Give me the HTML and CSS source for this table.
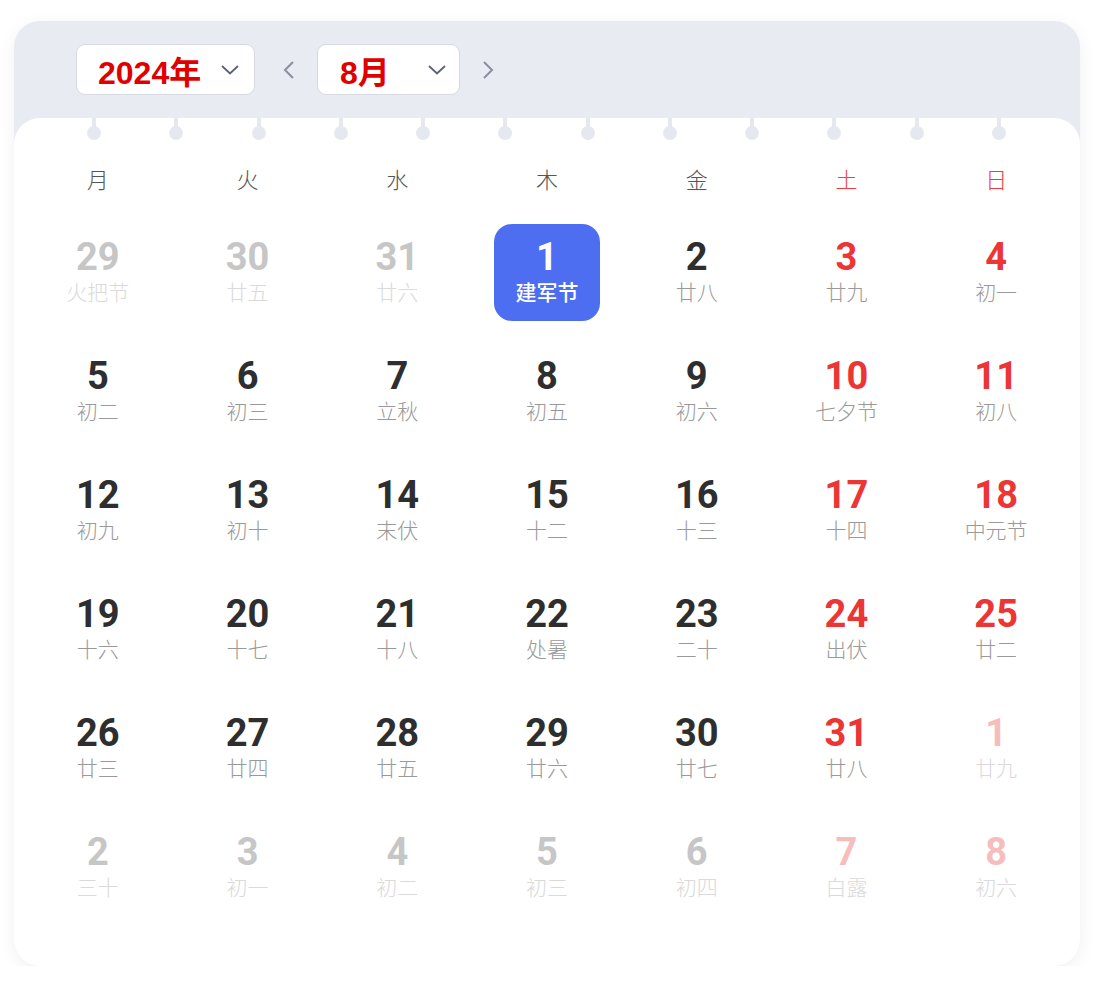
FILE: index.html
```html
<!DOCTYPE html>
<html>
<head>
    <title>万年历</title>
    <meta charset="utf-8">
    <link rel="stylesheet" href="styles.css">
</head>
<body>
    <div class="calendar">
        <div class="toolbar">
            <div class="picker picker-year">
                <span>2024年</span>
                <svg class="chevron" width="18" height="10" viewBox="0 0 18 10"><polyline points="1,1 9,8.5 17,1" fill="none" stroke="#5b6275" stroke-width="1.8"/></svg>
            </div>
            <svg class="arrow arrow-prev" width="12" height="20" viewBox="0 0 12 20"><polyline points="10,2 2,10 10,18" fill="none" stroke="#8a909e" stroke-width="2"/></svg>
            <div class="picker picker-month">
                <span>8月</span>
                <svg class="chevron" width="18" height="10" viewBox="0 0 18 10"><polyline points="1,1 9,8.5 17,1" fill="none" stroke="#5b6275" stroke-width="1.8"/></svg>
            </div>
            <svg class="arrow arrow-next" width="12" height="20" viewBox="0 0 12 20"><polyline points="2,2 10,10 2,18" fill="none" stroke="#8a909e" stroke-width="2"/></svg>
        </div>

        <div class="sheet">
            <div class="rings">
                <i></i><i></i><i></i><i></i><i></i><i></i>
                <i></i><i></i><i></i><i></i><i></i><i></i>
            </div>

            <div class="weekdays">
                <div>月</div>
                <div>火</div>
                <div>水</div>
                <div>木</div>
                <div>金</div>
                <div class="weekend">土</div>
                <div class="weekend">日</div>
            </div>

            <div class="days">
                <div class="day other"><b>29</b><span>火把节</span></div>
                <div class="day other"><b>30</b><span>廿五</span></div>
                <div class="day other"><b>31</b><span>廿六</span></div>
                <div class="day today"><b>1</b><span>建军节</span></div>
                <div class="day"><b>2</b><span>廿八</span></div>
                <div class="day weekend"><b>3</b><span>廿九</span></div>
                <div class="day weekend"><b>4</b><span>初一</span></div>

                <div class="day"><b>5</b><span>初二</span></div>
                <div class="day"><b>6</b><span>初三</span></div>
                <div class="day"><b>7</b><span>立秋</span></div>
                <div class="day"><b>8</b><span>初五</span></div>
                <div class="day"><b>9</b><span>初六</span></div>
                <div class="day weekend"><b>10</b><span>七夕节</span></div>
                <div class="day weekend"><b>11</b><span>初八</span></div>

                <div class="day"><b>12</b><span>初九</span></div>
                <div class="day"><b>13</b><span>初十</span></div>
                <div class="day"><b>14</b><span>末伏</span></div>
                <div class="day"><b>15</b><span>十二</span></div>
                <div class="day"><b>16</b><span>十三</span></div>
                <div class="day weekend"><b>17</b><span>十四</span></div>
                <div class="day weekend"><b>18</b><span>中元节</span></div>

                <div class="day"><b>19</b><span>十六</span></div>
                <div class="day"><b>20</b><span>十七</span></div>
                <div class="day"><b>21</b><span>十八</span></div>
                <div class="day"><b>22</b><span>处暑</span></div>
                <div class="day"><b>23</b><span>二十</span></div>
                <div class="day weekend"><b>24</b><span>出伏</span></div>
                <div class="day weekend"><b>25</b><span>廿二</span></div>

                <div class="day"><b>26</b><span>廿三</span></div>
                <div class="day"><b>27</b><span>廿四</span></div>
                <div class="day"><b>28</b><span>廿五</span></div>
                <div class="day"><b>29</b><span>廿六</span></div>
                <div class="day"><b>30</b><span>廿七</span></div>
                <div class="day weekend"><b>31</b><span>廿八</span></div>
                <div class="day weekend other"><b>1</b><span>廿九</span></div>

                <div class="day other"><b>2</b><span>三十</span></div>
                <div class="day other"><b>3</b><span>初一</span></div>
                <div class="day other"><b>4</b><span>初二</span></div>
                <div class="day other"><b>5</b><span>初三</span></div>
                <div class="day other"><b>6</b><span>初四</span></div>
                <div class="day weekend other"><b>7</b><span>白露</span></div>
                <div class="day weekend other"><b>8</b><span>初六</span></div>
            </div>
        </div>
    </div>
</body>
</html>
```
FILE: styles.css
```css
body {
    margin: 0;
    background: #ffffff;
    font-family: "Noto Sans CJK SC", "Noto Sans", sans-serif;
}
.calendar {
    margin: 21px 0 0 14px;
    width: 1066px;
    background-color: #e8ebf2;
    border-radius: 26px;
    overflow: hidden;
    box-shadow: 0px 4px 18px rgba(0, 0, 0, 0.06);
}
.toolbar {
    height: 97px;
    display: flex;
    align-items: center;
    padding-left: 62px;
}
.picker {
    height: 51px;
    box-sizing: border-box;
    background: #ffffff;
    border: 1px solid #d6d9e1;
    border-radius: 9px;
    display: flex;
    align-items: center;
    justify-content: space-between;
    padding: 0 15px 0 21px;
}
.picker span {
    color: #e00000;
    font-family: "Liberation Sans", "Noto Sans CJK SC", sans-serif;
    font-weight: bold;
    font-size: 32px;
}
.picker-year {
    width: 179px;
}
.picker-month {
    width: 143px;
    padding-left: 22px;
    padding-right: 13px;
}
.arrow-prev {
    margin: 0 22px 0 28px;
}
.arrow-next {
    margin-left: 22px;
}
.sheet {
    background: #ffffff;
    border-radius: 26px 26px 0 0;
    padding: 0 9px 50px 9px;
}
.rings {
    height: 22px;
    display: flex;
    justify-content: space-between;
    padding: 0 65px 0 64px;
}
.rings i {
    position: relative;
    width: 14px;
    height: 22px;
}
.rings i::before {
    content: "";
    position: absolute;
    left: 5px;
    top: 0;
    width: 4px;
    height: 10px;
    background: #e6e8ef;
}
.rings i::after {
    content: "";
    position: absolute;
    left: 0;
    top: 8px;
    width: 14px;
    height: 14px;
    border-radius: 50%;
    background: #e6e8ef;
}
.weekdays {
    display: grid;
    grid-template-columns: repeat(7, 1fr);
    margin-top: 18px;
    height: 40px;
    line-height: 40px;
    text-align: center;
    font-size: 22px;
    font-weight: 300;
    color: #555555;
}
.weekdays .weekend {
    color: #f03c3c;
}
.days {
    display: grid;
    grid-template-columns: repeat(7, 1fr);
    grid-auto-rows: 97px;
    row-gap: 22px;
    margin-top: 26px;
}
.day {
    display: flex;
    flex-direction: column;
    align-items: center;
    padding-top: 11px;
    box-sizing: border-box;
}
.day b {
    font-family: Roboto, "DejaVu Sans Condensed", sans-serif;
    font-weight: 700;
    font-size: 38px;
    line-height: 44px;
    color: #2e2e2e;
}
.day span {
    font-size: 21px;
    font-weight: 300;
    line-height: 24px;
    color: #999999;
}
.day.weekend b {
    color: #ec3535;
}
.day.other b {
    color: #c6c6c6;
}
.day.other span {
    color: #dadada;
}
.day.weekend.other b {
    color: #f7bdbd;
}
.day.today {
    width: 106px;
    justify-self: center;
    background: #4d6ef0;
    border-radius: 18px;
}
.day.today b,
.day.today span {
    color: #ffffff;
}
.day.today span {
    font-weight: 500;
}
```
